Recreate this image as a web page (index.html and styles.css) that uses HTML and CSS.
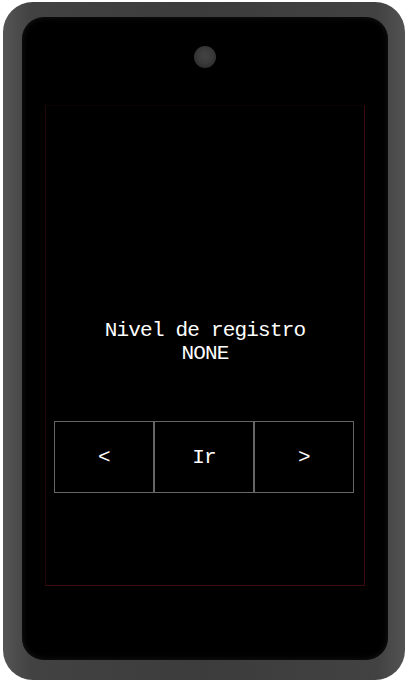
FILE: index.html
```html
<!DOCTYPE html>
<html lang="es">
<head>
<meta charset="utf-8">
<title>Nivel de registro</title>
<link rel="stylesheet" href="styles.css">
</head>
<body>
<div class="phone">
  <div class="screen">
    <div class="camera"></div>
    <div class="canvas">
      <div class="label">
        <div>Nivel de registro</div>
        <div>NONE</div>
      </div>
      <div class="buttons">
        <div class="btn">&lt;</div>
        <div class="btn">Ir</div>
        <div class="btn">&gt;</div>
      </div>
    </div>
  </div>
</div>
</body>
</html>
```

FILE: styles.css
```css
html, body {
  margin: 0;
  padding: 0;
  background: #ffffff;
}

.phone {
  box-sizing: border-box;
  width: 402px;
  height: 678px;
  margin: 2px 0 0 3px;
  padding: 15px 17px 20px 19px;
  border-radius: 30px;
  background: linear-gradient(90deg, #555555 0%, #424242 7%, #3c3c3c 50%, #424242 93%, #525252 100%);
}

.screen {
  box-sizing: border-box;
  width: 366px;
  height: 643px;
  padding: 29px 23px 0 23px;
  border-radius: 22px;
  background: #000000;
  box-shadow: inset 0 0 6px rgba(40, 40, 40, 0.6);
}

.camera {
  width: 22px;
  height: 22px;
  margin: 0 auto;
  border-radius: 50%;
  background: radial-gradient(circle at 50% 45%, #444444 0%, #3a3a3a 45%, #242424 100%);
}

.canvas {
  box-sizing: border-box;
  width: 320px;
  height: 481px;
  margin-top: 37px;
  padding-top: 213px;
  border: 1px solid;
  border-color: #0c0202 #3d0b0b #3d0b0b #240606;
  display: flex;
  flex-direction: column;
  align-items: center;
  font-family: "Liberation Mono", "DejaVu Sans Mono", monospace;
  font-size: 21px;
  letter-spacing: -0.8px;
  color: #ffffff;
}

.label {
  text-align: center;
  line-height: 23px;
}

.buttons {
  display: flex;
  margin-top: 56px;
  margin-right: 2px;
}

.btn {
  box-sizing: border-box;
  width: 100px;
  height: 72px;
  border: 1px solid #666666;
  display: flex;
  align-items: center;
  justify-content: center;
  line-height: 23px;
}
```
